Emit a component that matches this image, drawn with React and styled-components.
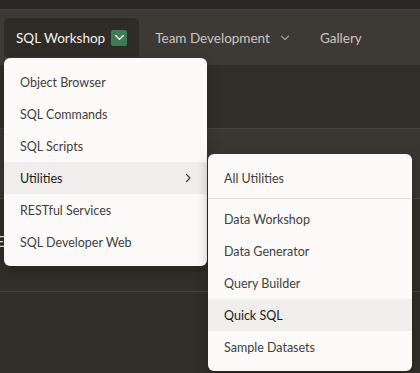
import React from 'react';
import styled, { createGlobalStyle } from 'styled-components';

const GlobalStyle = createGlobalStyle`
  html, body {
    margin: 0;
    padding: 0;
    background: #312e29;
    overflow: hidden;
  }
  body {
    font-family: 'Lato', 'Noto Sans', sans-serif;
  }
`;

const Page = styled.div`
  position: relative;
  width: 420px;
  height: 373px;
  overflow: hidden;
  background: #312e29;
`;

const TopStrip = styled.div`
  height: 9px;
  background: #2b2926;
  border-bottom: 1px solid #45423e;
`;

const Header = styled.nav`
  height: 55px;
  display: flex;
  align-items: center;
  padding-left: 4px;
  background: #3d3a36;
  box-sizing: border-box;
`;

const Tab = styled.div`
  display: flex;
  align-items: center;
  gap: ${(p) => (p.active ? 6 : 10)}px;
  height: 39px;
  padding: 0 12px;
  border-radius: 4px;
  font-size: 13.5px;
  color: ${(p) => (p.active ? '#f4f2ef' : '#c9c5bf')};
  background: ${(p) => (p.active ? '#2f2c28' : 'transparent')};
  margin-right: ${(p) => p.gap || 0}px;
`;

const CaretBox = styled.span`
  display: flex;
  align-items: center;
  justify-content: center;
  width: 16px;
  height: 16px;
  border-radius: 2px;
  background: #3b7c55;
`;

const Content = styled.div`
  padding-top: 63px;
`;

const Toolbar = styled.div`
  height: 12px;
  background: #3a3733;
  border-top: 1px solid #46433f;
`;

const Panel = styled.div`
  height: 57px;
  background: #393632;
  border-bottom: 1px solid #4a4743;
`;

const Stub = styled.div`
  height: 93px;
  padding: 33px 0 0 0;
  box-sizing: border-box;
  border-bottom: 1px solid #46433f;
  color: #e8e6e2;
  font-size: 15px;
  margin-left: -4px;
`;

const Menu = styled.ul`
  position: absolute;
  left: ${(p) => p.x}px;
  top: ${(p) => p.y}px;
  width: ${(p) => p.w}px;
  margin: 0;
  padding: 8px 0;
  list-style: none;
  background: #fbfaf8;
  border-radius: 6px;
  box-shadow: 0 4px 12px rgba(0, 0, 0, 0.25);
`;

const Item = styled.li`
  display: flex;
  align-items: center;
  justify-content: space-between;
  height: 32px;
  padding: 0 14px 0 16px;
  font-size: 12.5px;
  color: ${(p) => (p.active ? '#1c1a18' : '#42403d')};
  background: ${(p) => (p.active ? '#efeeec' : 'transparent')};
`;

const Separator = styled.li`
  height: 1px;
  margin: 4px 0;
  background: #e2e0dd;
`;

const ChevronDown = ({ color, size = 10 }) => (
  <svg width={size} height={size} viewBox="0 0 10 10" fill="none">
    <path d="M1.5 3.2 L5 6.7 L8.5 3.2" stroke={color} strokeWidth="1.2" strokeLinecap="round" strokeLinejoin="round" />
  </svg>
);

const ChevronRight = () => (
  <svg width="10" height="10" viewBox="0 0 10 10" fill="none">
    <path d="M3.5 1.5 L7 5 L3.5 8.5" stroke="#3e3c39" strokeWidth="1.2" strokeLinecap="round" strokeLinejoin="round" />
  </svg>
);

const mainItems = [
  'Object Browser',
  'SQL Commands',
  'SQL Scripts',
  'Utilities',
  'RESTful Services',
  'SQL Developer Web',
];

const utilityItems = ['Data Workshop', 'Data Generator', 'Query Builder', 'Quick SQL', 'Sample Datasets'];

export default function App() {
  return (
    <Page>
      <GlobalStyle />
      <TopStrip />
      <Header>
        <Tab active gap={4}>
          SQL Workshop
          <CaretBox>
            <ChevronDown color="#ffffff" size={11} />
          </CaretBox>
        </Tab>
        <Tab gap={6}>
          Team Development
          <ChevronDown color="#a9a59f" />
        </Tab>
        <Tab>Gallery</Tab>
      </Header>
      <Content>
        <Toolbar />
        <Panel />
        <Stub>E</Stub>
      </Content>

      <Menu x={4} y={58} w={203}>
        {mainItems.map((label) => (
          <Item key={label} active={label === 'Utilities'}>
            {label}
            {label === 'Utilities' && <ChevronRight />}
          </Item>
        ))}
      </Menu>

      <Menu x={208} y={154} w={204}>
        <Item>All Utilities</Item>
        <Separator />
        {utilityItems.map((label) => (
          <Item key={label} active={label === 'Quick SQL'}>
            {label}
          </Item>
        ))}
      </Menu>
    </Page>
  );
}
